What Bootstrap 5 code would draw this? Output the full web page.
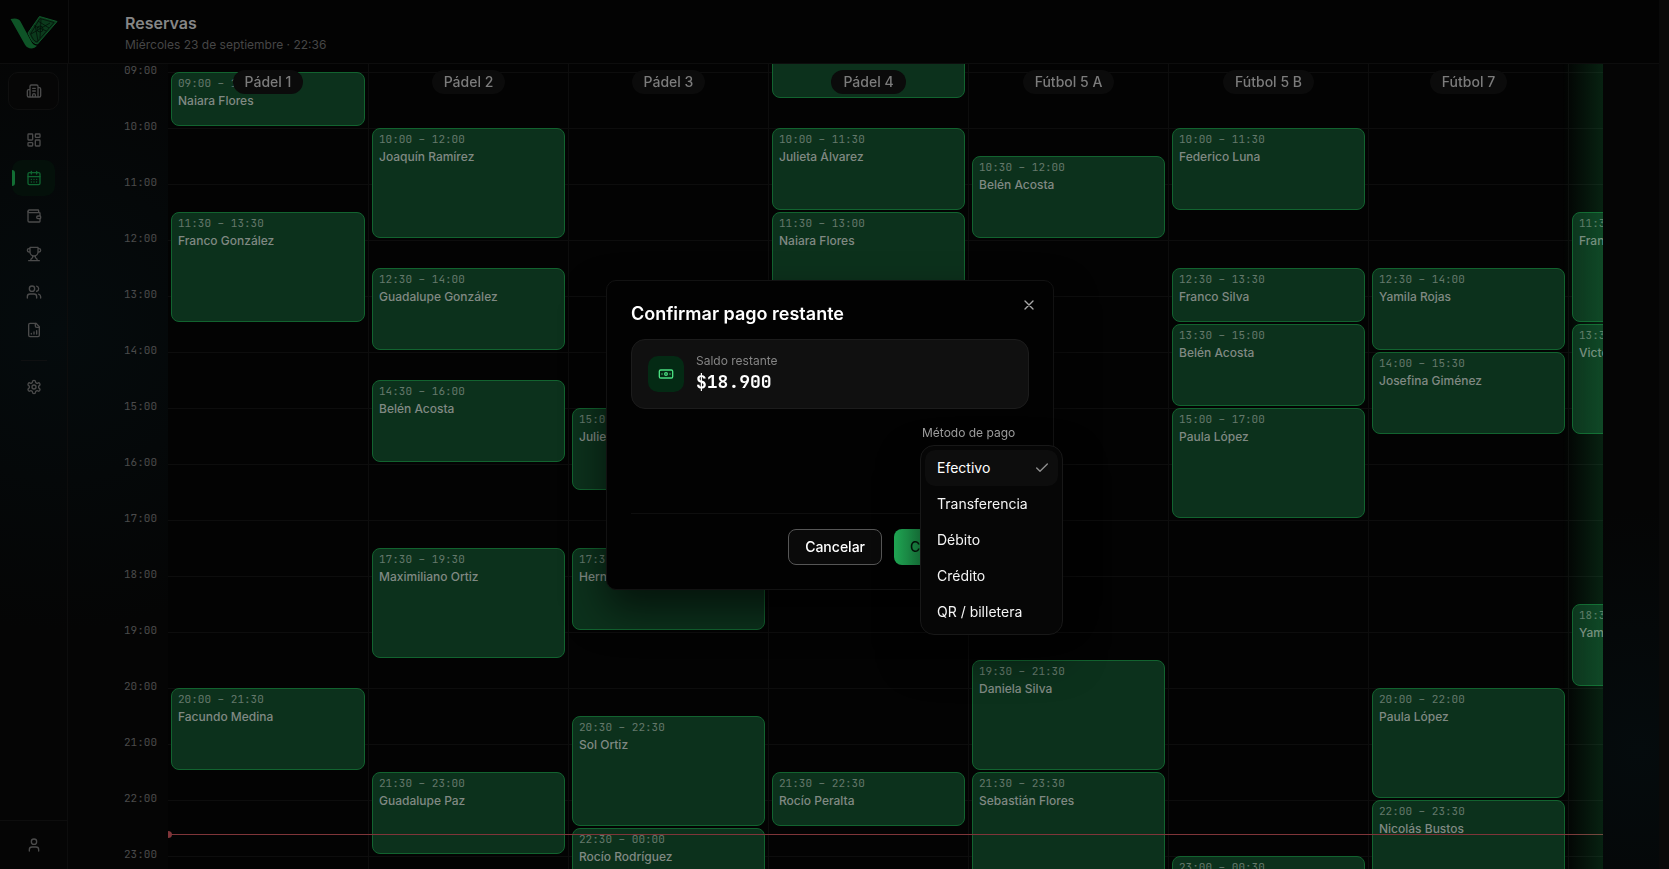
<!DOCTYPE html>
<html lang="es" data-bs-theme="dark">
<head>
<meta charset="utf-8">
<meta name="viewport" content="width=device-width, initial-scale=1">
<title>Reservas</title>
<link href="https://cdn.jsdelivr.net/npm/bootstrap@5.3.0/dist/css/bootstrap.min.css" rel="stylesheet">
<style>
  :root { --line: #0d0d0d; --gutter: 10px; --mono: "JetBrains Mono", "DejaVu Sans Mono", monospace; }
  body {
    font-family: Inter, "Liberation Sans", sans-serif; font-size: 14px; line-height: 20px; color: #868686;
    background:
      radial-gradient(circle at 60px 330px, #050b0d 0, transparent 300px),
      radial-gradient(circle at calc(100% - 30px) 750px, #050b0d 0, transparent 240px),
      #050505;
  }
  svg.ico { width: 16px; height: 16px; fill: none; stroke: currentColor; stroke-width: 2; stroke-linecap: round; stroke-linejoin: round; }
  .page { min-width: 0; }
  .page-gutter { width: var(--gutter); background: #090909; }

  /* top bar */
  .topbar { height: 64px; background: #030303; border-bottom: 1px solid var(--line); }
  .brand { width: 69px; border-right: 1px solid var(--line); }
  .topbar-titles { padding: 12px 56px; }
  .topbar-titles h1 { font-size: 16px; line-height: 22px; font-weight: 600; color: #868686; }
  .topbar-titles p { font-size: 12px; line-height: 22px; color: #464646; }

  /* side bar */
  .sidebar { width: 68px; border-right: 1px solid var(--line); color: #4b4b4b; }
  .club-btn { width: 51px; height: 38px; border: 1px solid #0f0f0f; border-radius: 10px; background: #060606; color: inherit; }
  .side-link { width: 43px; height: 36px; margin-bottom: 2px; border-radius: 10px; color: inherit; position: relative; }
  .side-link.active { color: #0f6430; background: #04100a; }
  .side-link.active::before { content: ""; position: absolute; left: 0; top: 10px; width: 3px; height: 16px; border-radius: 0 3px 3px 0; background: #126e34; }
  .side-rule { width: 26px; height: 1px; background: #0f1011; margin: 10px 0 8px; }
  .side-foot { height: 49px; border-top: 1px solid var(--line); }

  /* agenda */
  .agenda { padding: 0 56px; overflow: hidden; min-width: 0; }
  .hours { width: 44px; margin-top: -10px; font: 11px/16px var(--mono); color: #4b4b4b; }
  .hours time { display: block; height: 56px; }
  .courts { overflow: clip; position: relative; min-width: 0; background: #030303; }
  .court {
    flex: 0 0 200px; display: grid; grid-template-columns: 100%; grid-template-rows: repeat(34, 28px);
    border-left: 1px solid var(--line);
    background: repeating-linear-gradient(var(--line) 0 1px, transparent 1px 56px);
  }
  .court:first-child { border-left: 0; }
  .court-name {
    grid-area: 1 / 1 / -1 / 2; align-self: start; justify-self: center; position: sticky; top: 6px; z-index: 2;
    padding: 2px 12px; border-radius: 12px; background: #0b0b0b; font-size: 14px; line-height: 20px; font-weight: 500; color: #7c7c7c;
  }
  .booking {
    grid-column: 1; margin: 0 3px 2px; padding: 2px 6px; overflow: hidden; text-align: left; white-space: nowrap;
    border: 1px solid #12632f; border-radius: 8px; background: #0c311c; color: #808983;
    display: flex; flex-direction: column;
  }
  .booking time { font: 11px/16px var(--mono); color: #64786b; }
  .booking span { font-size: 12px; line-height: 20px; font-weight: 500; }
  .edge-glow { position: absolute; inset: 0 0 0 auto; width: 40px; z-index: 3; background: linear-gradient(90deg, transparent, rgba(34,197,94,.16)); }
  .now-line { position: absolute; left: 0; right: 0; height: 1px; background: #7f3539; z-index: 1; }
  .now-line::before { content: ""; position: absolute; left: -4px; top: -3px; width: 8px; height: 7px; border-radius: 50%; background: #7f3539; }

  /* payment dialog */
  .modal { width: calc(100% - var(--gutter) + 1px); }
  .pay-dialog { max-width: 448px; }
  .pay-content { background: #020202; border: 1px solid #121212; border-radius: 10px; padding: 24px; box-shadow: 0 20px 40px rgba(0,0,0,.6); color: #fff; }
  .pay-content h2 { font-size: 18px; line-height: 18px; font-weight: 600; margin: 0 0 16px; }
  .pay-close { position: absolute; right: 16px; top: 16px; width: 16px; height: 16px; padding: 0; border: 0; background: none; color: #a9a9a9; display: flex; }
  .balance { background: #101010; border: 1px solid #1c1c1c; border-radius: 14px; padding: 13px 16px; gap: 12px; }
  .balance-icon { width: 36px; height: 36px; border-radius: 10px; background: #042a14; color: #4ade80; }
  .balance small { font-size: 12px; line-height: 16px; color: #858585; }
  .balance strong { font: 700 18px/26px var(--mono); }
  .method { width: 108px; margin: 15px 0 26px; position: relative; }
  .method label { font-size: 12px; line-height: 18px; color: #a0a0a0; margin-bottom: 6px; padding-left: 1px; }
  .method-trigger { height: 36px; border: 1px solid #222; border-radius: 8px; background: #0a0a0a; color: #fff; }
  .method-menu { position: absolute; top: 21px; left: -1px; width: 143px; padding: 4px; background: #060606; border: 1px solid #181818; border-radius: 14px; box-shadow: 0 20px 40px rgba(0,0,0,.5); z-index: 5; }
  .method-menu button { height: 36px; padding: 0 8px 0 12px; border: 0; border-radius: 10px; background: none; color: #f4f4f4; font-size: 14px; line-height: 20px; }
  .method-menu button[aria-selected=true] { background: #0d0d0d; color: #fff; }
  .method-menu svg { color: #909090; }
  .pay-foot { border-top: 1px solid #0e0e0e; padding-top: 15px; gap: 12px; }
  .pay-foot .btn { height: 36px; padding: 0 16px; font-size: 14px; line-height: 20px; font-weight: 500; border-radius: 8px; }
  .btn-cancel, .btn-cancel:hover { background: #0a0a0a; border: 1px solid #565656; color: #fff; }
  .btn-confirm, .btn-confirm:hover { width: 135px; border: 0; background: linear-gradient(90deg, #21ad57, #1b8a45 30px); color: #04140a; }
</style>
</head>
<body class="vh-100 overflow-hidden d-flex">

<div class="page d-flex flex-column flex-grow-1 vh-100 overflow-hidden">
  <header class="topbar d-flex flex-shrink-0">
    <a href="#" class="brand d-flex align-items-center justify-content-center" aria-label="Inicio">
      <svg width="48" height="34" viewBox="0 0 48 34">
        <path fill="#0e5427" d="M.5 4C5 3 8.500 3.200 10.500 6.500L21 26c1.500 3 3.500 4.500 6 4.800-2.500 3.200-9 4-12-1z"/>
        <path fill="#0b3a1c" stroke="#0f5629" stroke-width="1" stroke-linejoin="round" d="M29.500 1.500 47 6.500 27.500 29c-4-.5-5.500-3-7-6l-2.500-5z"/>
        <g fill="none" stroke="#021007" stroke-width=".8">
          <path d="M30 3.500 44 7.500 27 27c-3-.8-4.500-3.500-6.500-8z"/>
          <path d="m24.500 11 12 5M28 6l11 7M21 19l19-11M31 4l-1 19M25 10l3 16"/>
          <circle cx="30" cy="14" r="3"/>
        </g>
      </svg>
    </a>
    <div class="topbar-titles pe-0">
      <h1 class="m-0">Reservas</h1>
      <p class="m-0">Miércoles 23 de septiembre · 22:36</p>
    </div>
  </header>

  <div class="d-flex flex-grow-1 overflow-hidden">
    <nav class="sidebar d-flex flex-column flex-shrink-0 align-items-center pt-2" aria-label="Principal">
      <button class="club-btn d-flex align-items-center justify-content-center mb-2" aria-label="Club">
        <svg class="ico" viewBox="0 0 24 24"><path d="M10 12h4M10 8h4M14 21v-3a2 2 0 0 0-4 0v3M6 10H4a2 2 0 0 0-2 2v7a2 2 0 0 0 2 2h16a2 2 0 0 0 2-2V9a2 2 0 0 0-2-2h-2M6 21V5a2 2 0 0 1 2-2h8a2 2 0 0 1 2 2v16"/></svg>
      </button>
      <div class="d-flex flex-column align-items-center pt-1 flex-grow-1" id="side"></div>
      <div class="side-foot w-100 d-flex align-items-center justify-content-center">
        <a href="#" class="text-reset d-flex" aria-label="Perfil"><svg class="ico" viewBox="0 0 24 24"><path d="M19 21v-2a4 4 0 0 0-4-4H9a4 4 0 0 0-4 4v2"/><circle cx="12" cy="7" r="4"/></svg></a>
      </div>
    </nav>
    <main class="agenda d-flex flex-grow-1 align-items-start" id="agenda">
      <div class="hours flex-shrink-0" id="hours"></div>
      <div class="courts d-flex flex-grow-1" id="courts"></div>
    </main>
  </div>
</div>
<div class="page-gutter flex-shrink-0"></div>

<div class="modal d-block" role="dialog" aria-modal="true" aria-labelledby="payTitle">
  <div class="modal-dialog modal-dialog-centered pay-dialog">
    <div class="modal-content pay-content">
      <h2 id="payTitle">Confirmar pago restante</h2>
      <button class="pay-close" aria-label="Cerrar"><svg class="ico" viewBox="0 0 24 24"><path d="M18 6 6 18M6 6l12 12"/></svg></button>
      <div class="balance d-flex align-items-center">
        <span class="balance-icon d-flex align-items-center justify-content-center">
          <svg class="ico" viewBox="0 0 24 24"><rect width="20" height="12" x="2" y="6" rx="2"/><circle cx="12" cy="12" r="2"/><path d="M6 12h.01M18 12h.01"/></svg>
        </span>
        <div class="d-flex flex-column">
          <small>Saldo restante</small>
          <strong>$18.900</strong>
        </div>
      </div>
      <div class="method ms-auto">
        <label class="d-block" for="method">Método de pago</label>
        <button id="method" class="method-trigger w-100" aria-haspopup="listbox" aria-expanded="true"></button>
        <div class="method-menu d-flex flex-column" role="listbox" aria-label="Método de pago">
          <button role="option" aria-selected="true" class="d-flex align-items-center justify-content-between">Efectivo<svg class="ico" viewBox="0 0 24 24"><path d="M20 6 9 17l-5-5"/></svg></button>
          <button role="option" class="text-start">Transferencia</button>
          <button role="option" class="text-start">Débito</button>
          <button role="option" class="text-start">Crédito</button>
          <button role="option" class="text-start">QR / billetera</button>
        </div>
      </div>
      <div class="pay-foot d-flex justify-content-end">
        <button class="btn btn-cancel">Cancelar</button>
        <button class="btn btn-confirm text-nowrap">Confirmar pago</button>
      </div>
    </div>
  </div>
</div>

<script>
  const icons = [
    ['Panel', '<rect width="7" height="9" x="3" y="3" rx="1"/><rect width="7" height="5" x="14" y="3" rx="1"/><rect width="7" height="9" x="14" y="12" rx="1"/><rect width="7" height="5" x="3" y="16" rx="1"/>'],
    ['Reservas', '<path d="M8 2v4M16 2v4M3 10h18M8 14h.01M12 14h.01M16 14h.01M8 18h.01M12 18h.01M16 18h.01"/><rect width="18" height="18" x="3" y="4" rx="2"/>'],
    ['Caja', '<path d="M19 7V4a1 1 0 0 0-1-1H5a2 2 0 0 0 0 4h15a1 1 0 0 1 1 1v4h-3a2 2 0 0 0 0 4h3a1 1 0 0 0 1-1v-2a1 1 0 0 0-1-1"/><path d="M3 5v14a2 2 0 0 0 2 2h15a1 1 0 0 0 1-1v-4"/>'],
    ['Torneos', '<path d="M6 9H4.500a2.500 2.500 0 0 1 0-5H6M18 9h1.500a2.500 2.500 0 0 0 0-5H18M4 22h16M10 14.660V17c0 .55-.47.98-.97 1.210C7.850 18.750 7 20.240 7 22M14 14.660V17c0 .55.47.98.97 1.210C16.150 18.750 17 20.240 17 22M18 2H6v7a6 6 0 0 0 12 0V2Z"/>'],
    ['Clientes', '<path d="M16 21v-2a4 4 0 0 0-4-4H6a4 4 0 0 0-4 4v2"/><circle cx="9" cy="7" r="4"/><path d="M22 21v-2a4 4 0 0 0-3-3.870M16 3.130a4 4 0 0 1 0 7.750"/>'],
    ['Informes', '<path d="M15 2H6a2 2 0 0 0-2 2v16a2 2 0 0 0 2 2h12a2 2 0 0 0 2-2V7Z"/><path d="M14 2v4a2 2 0 0 0 2 2h4M8 18v-1M12 18v-3M16 18v-5"/>'],
    ['Ajustes', '<path d="M12.220 2h-.44a2 2 0 0 0-2 2v.18a2 2 0 0 1-1 1.730l-.43.25a2 2 0 0 1-2 0l-.15-.08a2 2 0 0 0-2.730.73l-.22.38a2 2 0 0 0 .73 2.730l.15.1a2 2 0 0 1 1 1.720v.51a2 2 0 0 1-1 1.740l-.15.09a2 2 0 0 0-.73 2.730l.22.38a2 2 0 0 0 2.730.73l.15-.08a2 2 0 0 1 2 0l.43.25a2 2 0 0 1 1 1.730V20a2 2 0 0 0 2 2h.44a2 2 0 0 0 2-2v-.18a2 2 0 0 1 1-1.730l.43-.25a2 2 0 0 1 2 0l.15.08a2 2 0 0 0 2.730-.73l.22-.39a2 2 0 0 0-.73-2.730l-.15-.08a2 2 0 0 1-1-1.740v-.5a2 2 0 0 1 1-1.740l.15-.09a2 2 0 0 0 .73-2.730l-.22-.38a2 2 0 0 0-2.730-.73l-.15.08a2 2 0 0 1-2 0l-.43-.25a2 2 0 0 1-1-1.730V4a2 2 0 0 0-2-2z"/><circle cx="12" cy="12" r="3"/>']
  ];
  document.getElementById('side').innerHTML = icons.map(([name, art]) =>
    (name === 'Ajustes' ? '<div class="side-rule"></div>' : '') +
    `<a href="#" aria-label="${name}" class="side-link flex-shrink-0 d-flex align-items-center justify-content-center ${name === 'Reservas' ? 'active' : ''}"><svg class="ico" viewBox="0 0 24 24">${art}</svg></a>`).join('');

  const firstHour = 8, halfHour = 28;
  const courts = [
    ['Pádel 1', [['09:00', '10:00', 'Naiara Flores'], ['11:30', '13:30', 'Franco González'], ['20:00', '21:30', 'Facundo Medina']]],
    ['Pádel 2', [['10:00', '12:00', 'Joaquín Ramírez'], ['12:30', '14:00', 'Guadalupe González'], ['14:30', '16:00', 'Belén Acosta'], ['17:30', '19:30', 'Maximiliano Ortiz'], ['21:30', '23:00', 'Guadalupe Paz']]],
    ['Pádel 3', [['15:00', '16:30', 'Julieta Álvarez'], ['17:30', '19:00', 'Hernán Silva'], ['20:30', '22:30', 'Sol Ortiz'], ['22:30', '00:00', 'Rocío Rodríguez']]],
    ['Pádel 4', [['08:00', '09:30', ''], ['10:00', '11:30', 'Julieta Álvarez'], ['11:30', '13:00', 'Naiara Flores'], ['21:30', '22:30', 'Rocío Peralta']]],
    ['Fútbol 5 A', [['10:30', '12:00', 'Belén Acosta'], ['19:30', '21:30', 'Daniela Silva'], ['21:30', '23:30', 'Sebastián Flores']]],
    ['Fútbol 5 B', [['10:00', '11:30', 'Federico Luna'], ['12:30', '13:30', 'Franco Silva'], ['13:30', '15:00', 'Belén Acosta'], ['15:00', '17:00', 'Paula López'], ['23:00', '00:30', '']]],
    ['Fútbol 7', [['12:30', '14:00', 'Yamila Rojas'], ['14:00', '15:30', 'Josefina Giménez'], ['20:00', '22:00', 'Paula López'], ['22:00', '23:30', 'Nicolás Bustos']]],
    ['', [['11:30', '13:30', 'Franco Silva'], ['13:30', '15:30', 'Victoria Paz'], ['18:30', '20:00', 'Yamila Rojas']]]
  ];
  const slot = t => { let [h, m] = t.split(':').map(Number); if (h < firstHour) h += 24; return (h - firstHour) * 2 + m / 30; };
  // The opening hour carries no label of its own.
  document.getElementById('hours').innerHTML = Array.from({ length: 16 }, (_, i) => `<time>${i ? String(i + firstHour).padStart(2, '0') + ':00' : ''}</time>`).join('');
  document.getElementById('courts').innerHTML = courts.map(([name, list]) =>
    `<section class="court">${name ? `<h2 class="court-name m-0">${name}</h2>` : ''}${list.map(([a, b, who]) =>
      `<button class="booking" style="grid-row:${slot(a) + 1}/${slot(b) + 1}">${a === '08:00' ? '' : `<time>${a} – ${b}</time>`}<span>${who}</span></button>`).join('')}</section>`).join('') +
    `<div class="edge-glow"></div><div class="now-line" style="top:${Math.round(slot('22:36') * halfHour)}px"></div>`;
  document.getElementById('agenda').scrollTop = 48;
</script>
<script src="https://cdn.jsdelivr.net/npm/bootstrap@5.3.0/dist/js/bootstrap.bundle.min.js"></script>
</body>
</html>
